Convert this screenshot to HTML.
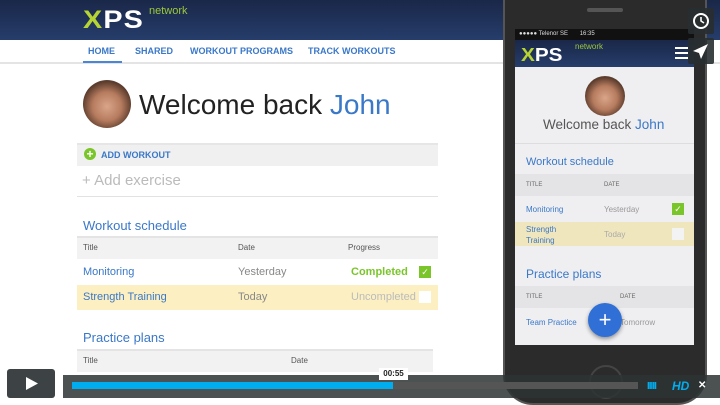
<!DOCTYPE html>
<html><head><style>
*{margin:0;padding:0;box-sizing:border-box}
body{width:720px;height:405px;overflow:hidden;position:relative;background:#fff;font-family:"Liberation Sans",sans-serif}
.a{position:absolute}
.blue{color:#3a78c8}
</style></head><body>
<div class="a" style="left:0;top:0;width:720px;height:40px;background:linear-gradient(#1a2748,#263d6b)"></div>
<div class="a" style="left:83px;top:8px;font:bold 25px/25px 'Liberation Sans';color:#fff;letter-spacing:1px;transform:scaleX(1.15);transform-origin:left"><span style="color:#b6d433">X</span>PS</div>
<div class="a" style="left:149px;top:5px;font:11px 'Liberation Sans';color:#9cc83a">network</div>
<div class="a" style="left:0;top:62px;width:720px;height:2px;background:#e4e4e4"></div>
<div class="a blue" style="top:46px;left:88px;font:bold 9px 'Liberation Sans'">HOME</div>
<div class="a" style="left:83px;top:61px;width:39px;height:2px;background:#4a86d8"></div>
<div class="a blue" style="top:46px;left:135px;font:bold 9px 'Liberation Sans'">SHARED</div>
<div class="a blue" style="top:46px;left:190px;font:bold 9px 'Liberation Sans'">WORKOUT PROGRAMS</div>
<div class="a blue" style="top:46px;left:308px;font:bold 9px 'Liberation Sans'">TRACK WORKOUTS</div>
<div class="a" style="left:83px;top:80px;width:48px;height:48px;border-radius:50%;background:radial-gradient(circle at 50% 55%,#d9a58a 0,#b77c5f 40%,#5a3b2c 70%,#777 100%)"></div>
<div class="a" style="left:139px;top:89px;font:28px 'Liberation Sans';color:#222">Welcome back <span class="blue">John</span></div>
<div class="a" style="left:77px;top:143px;width:361px;height:23px;background:#f0f0f0;border-top:2px solid #e6e6e6"></div>
<div class="a" style="left:84px;top:148px;width:12px;height:12px;border-radius:50%;background:#7ac52a;color:#fff;font:bold 12px/12px 'Liberation Sans';text-align:center">+</div>
<div class="a blue" style="left:101px;top:150px;font:bold 9px 'Liberation Sans'">ADD WORKOUT</div>
<div class="a" style="left:82px;top:172px;font:15px 'Liberation Sans';color:#bbb">+ Add exercise</div>
<div class="a" style="left:77px;top:196px;width:361px;height:1px;background:#e2e2e2"></div>
<div class="a blue" style="left:83px;top:218px;font:13px 'Liberation Sans'">Workout schedule</div>
<div class="a" style="left:77px;top:236px;width:361px;height:23px;background:#f2f2f2;border-top:2px solid #e4e4e4"></div>
<div class="a" style="left:83px;top:243px;font:8px 'Liberation Sans';color:#555">Title</div>
<div class="a" style="left:238px;top:243px;font:8px 'Liberation Sans';color:#555">Date</div>
<div class="a" style="left:348px;top:243px;font:8px 'Liberation Sans';color:#555">Progress</div>
<div class="a blue" style="left:83px;top:266px;font:11px 'Liberation Sans'">Monitoring</div>
<div class="a" style="left:238px;top:266px;font:11px 'Liberation Sans';color:#888">Yesterday</div>
<div class="a" style="left:351px;top:266px;font:bold 11px 'Liberation Sans';color:#7ac52a">Completed</div>
<div class="a" style="left:419px;top:266px;width:12px;height:12px;background:#7ac52a;color:#fff;font:9px/12px sans-serif;text-align:center">✓</div>
<div class="a" style="left:77px;top:285px;width:361px;height:25px;background:#fcefc2"></div>
<div class="a blue" style="left:83px;top:291px;font:11px 'Liberation Sans'">Strength Training</div>
<div class="a" style="left:238px;top:291px;font:11px 'Liberation Sans';color:#888">Today</div>
<div class="a" style="left:351px;top:291px;font:11px 'Liberation Sans';color:#bbb">Uncompleted</div>
<div class="a" style="left:419px;top:291px;width:12px;height:12px;background:#fff"></div>
<div class="a blue" style="left:83px;top:330px;font:13px 'Liberation Sans'">Practice plans</div>
<div class="a" style="left:77px;top:349px;width:356px;height:23px;background:#f2f2f2;border-top:2px solid #e4e4e4"></div>
<div class="a" style="left:83px;top:356px;font:8px 'Liberation Sans';color:#555">Title</div>
<div class="a" style="left:291px;top:356px;font:8px 'Liberation Sans';color:#555">Date</div>

<!-- phone -->
<div class="a" style="left:503px;top:-10px;width:204px;height:415px;background:#2b2b2b;border-radius:0 0 30px 30px;border:2px solid #555"></div>
<div class="a" style="left:587px;top:8px;width:36px;height:4px;border-radius:2px;background:#555"></div>
<div class="a" style="left:515px;top:29px;width:179px;height:316px;background:#efeff2"></div>
<div class="a" style="left:515px;top:29px;width:179px;height:11px;background:#111;color:#ddd;font:6px/11px 'Liberation Sans';padding-left:4px">●●●●● Telenor SE &nbsp;&nbsp;&nbsp;&nbsp;&nbsp;&nbsp;16:35</div>
<div class="a" style="left:515px;top:40px;width:179px;height:27px;background:linear-gradient(#1a2748,#263d6b)"></div>
<div class="a" style="left:521px;top:45px;font:bold 18px 'Liberation Sans';color:#fff;transform:scaleX(1.15);transform-origin:left"><span style="color:#b6d433">X</span>PS</div>
<div class="a" style="left:575px;top:42px;font:8px 'Liberation Sans';color:#9cc83a">network</div>
<div class="a" style="left:675px;top:47px;width:13px;height:12px;border-top:2px solid #fff;border-bottom:2px solid #fff"><div style="margin-top:3px;height:2px;background:#fff"></div></div>
<div class="a" style="left:585px;top:76px;width:40px;height:40px;border-radius:50%;background:radial-gradient(circle at 50% 55%,#d9a58a 0,#b77c5f 40%,#5a3b2c 70%,#888 100%)"></div>
<div class="a" style="left:543px;top:117px;font:13.5px 'Liberation Sans';color:#555">Welcome back <span class="blue">John</span></div>
<div class="a" style="left:515px;top:143px;width:179px;height:1px;background:#ddd"></div>
<div class="a blue" style="left:526px;top:156px;font:11px 'Liberation Sans'">Workout schedule</div>
<div class="a" style="left:515px;top:174px;width:179px;height:22px;background:#e4e4e6"></div>
<div class="a" style="left:526px;top:182px;font:6px 'Liberation Sans';color:#666">TITLE</div>
<div class="a" style="left:604px;top:182px;font:6px 'Liberation Sans';color:#666">DATE</div>
<div class="a blue" style="left:526px;top:205px;font:8px 'Liberation Sans'">Monitoring</div>
<div class="a" style="left:604px;top:205px;font:8px 'Liberation Sans';color:#999">Yesterday</div>
<div class="a" style="left:672px;top:203px;width:12px;height:12px;background:#7ac52a;color:#fff;font:9px/12px sans-serif;text-align:center">✓</div>
<div class="a" style="left:515px;top:222px;width:179px;height:24px;background:#f0e6bd"></div>
<div class="a blue" style="left:526px;top:224px;font:8px/11px 'Liberation Sans'">Strength<br>Training</div>
<div class="a" style="left:604px;top:230px;font:8px 'Liberation Sans';color:#aaa">Today</div>
<div class="a" style="left:672px;top:228px;width:12px;height:12px;background:#f3f3f3"></div>
<div class="a blue" style="left:526px;top:267px;font:12px 'Liberation Sans'">Practice plans</div>
<div class="a" style="left:515px;top:286px;width:179px;height:22px;background:#e4e4e6"></div>
<div class="a" style="left:526px;top:294px;font:6px 'Liberation Sans';color:#666">TITLE</div>
<div class="a" style="left:620px;top:294px;font:6px 'Liberation Sans';color:#666">DATE</div>
<div class="a blue" style="left:526px;top:318px;font:8px 'Liberation Sans'">Team Practice</div>
<div class="a" style="left:620px;top:318px;font:8px 'Liberation Sans';color:#999">Tomorrow</div>
<div class="a" style="left:588px;top:303px;width:34px;height:34px;border-radius:50%;background:#2f6fd6;box-shadow:0 2px 4px rgba(0,0,0,.4);color:#fff;font:22px/34px 'Liberation Sans';text-align:center">+</div>
<div class="a" style="left:589px;top:365px;width:34px;height:34px;border-radius:50%;border:2px solid #444"></div>

<div class="a" style="left:688px;top:8px;width:26px;height:26px;background:rgba(40,45,48,.9);border-radius:2px"><svg width="26" height="26"><circle cx="13" cy="13" r="7" fill="none" stroke="#fff" stroke-width="2"/><path d="M13 9v4l3 2" stroke="#fff" stroke-width="1.6" fill="none"/></svg></div>
<div class="a" style="left:688px;top:38px;width:26px;height:26px;background:rgba(40,45,48,.9);border-radius:2px"><svg width="26" height="26"><path d="M20 6L5 13l6 2 2 6z" fill="#fff"/></svg></div>

<!-- controls -->
<div class="a" style="left:7px;top:369px;width:48px;height:29px;background:#3d4244;border-radius:3px"><svg width="48" height="29"><path d="M19 8v13l12-6.5z" fill="#fff"/></svg></div>
<div class="a" style="left:63px;top:375px;width:657px;height:23px;background:rgba(45,50,52,.85)"></div>
<div class="a" style="left:72px;top:382px;width:566px;height:7px;background:#555"></div>
<div class="a" style="left:72px;top:382px;width:321px;height:7px;background:#00aef0"></div>
<div class="a" style="left:379px;top:368px;width:29px;height:12px;background:#fff;font:bold 8px/12px 'Liberation Sans';color:#222;text-align:center">00:55</div>
<div class="a" style="left:647px;top:381px;font:bold 10px 'Liberation Sans';color:#00aef0;letter-spacing:-1px">IIIII</div>
<div class="a" style="left:672px;top:379px;font:italic bold 12px 'Liberation Sans';color:#00aef0">HD</div>
<div class="a" style="left:698px;top:380px;font:bold 10px 'Liberation Sans';color:#fff">✕</div>
</body></html>
